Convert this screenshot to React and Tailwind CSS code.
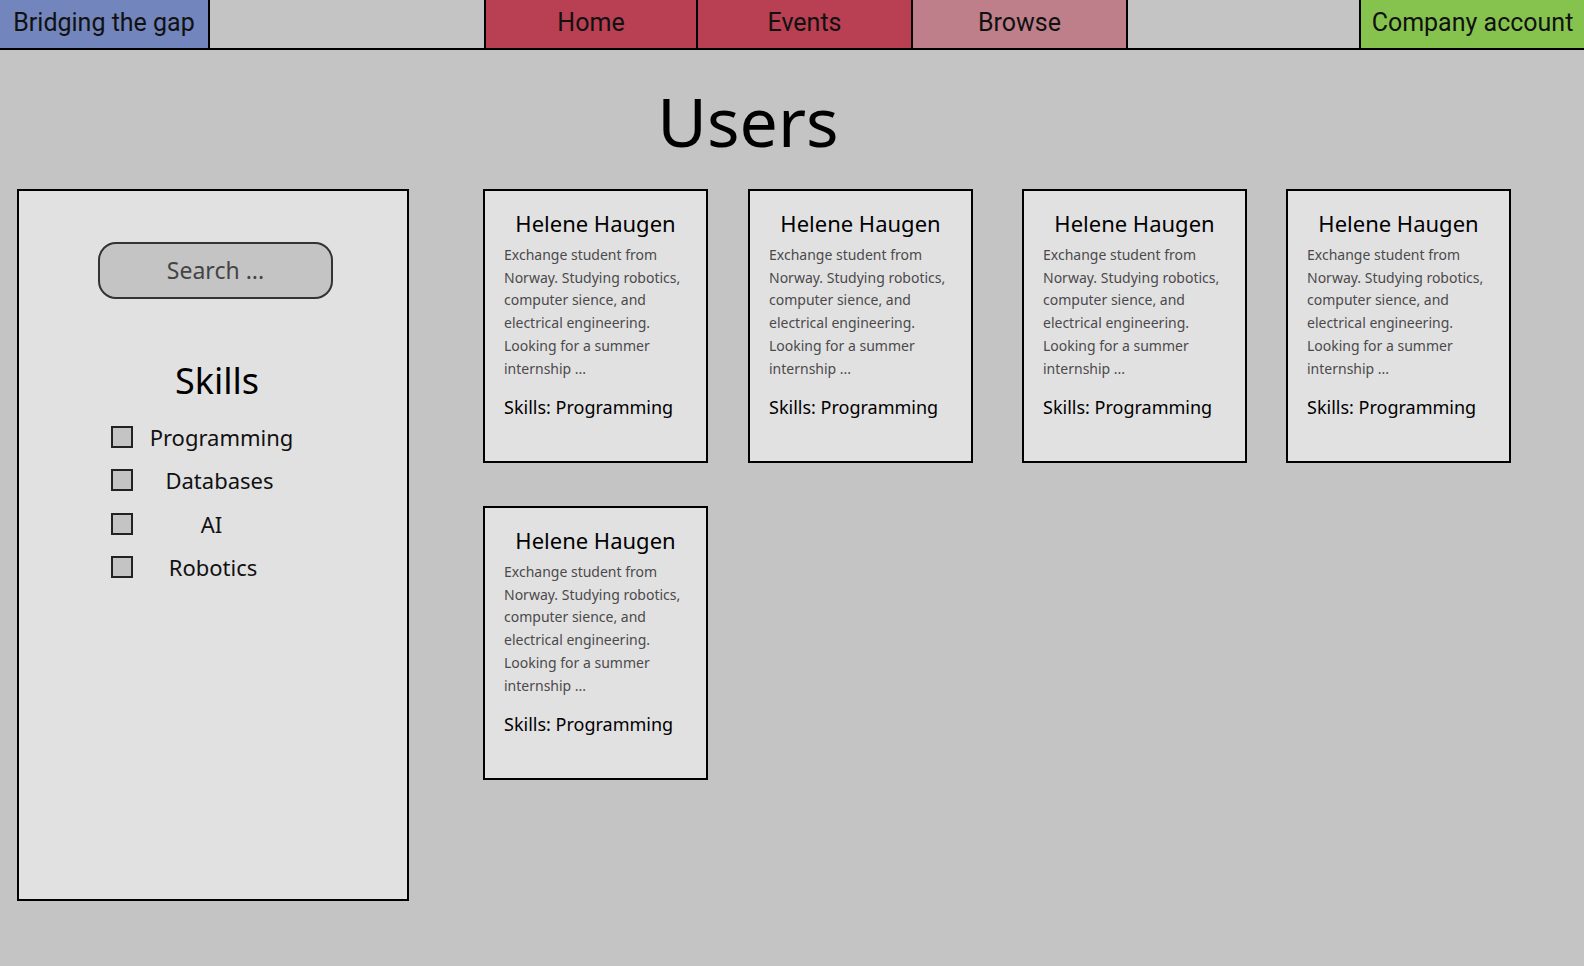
import React from "react";

const skills = [
  { name: "Programming", box: "w-[177px]" },
  { name: "Databases", box: "w-[173px]" },
  { name: "AI", box: "w-[157px]" },
  { name: "Robotics", box: "w-[160px]" },
];

const users = [
  { id: 1, name: "Helene Haugen", skill: "Programming" },
  { id: 2, name: "Helene Haugen", skill: "Programming" },
  { id: 3, name: "Helene Haugen", skill: "Programming" },
  { id: 4, name: "Helene Haugen", skill: "Programming" },
  { id: 5, name: "Helene Haugen", skill: "Programming" },
];

const bio = [
  "Exchange student from",
  "Norway. Studying robotics,",
  "computer sience, and",
  "electrical engineering.",
  "Looking for a summer",
  "internship ...",
];

function Navbar() {
  return (
    <nav className="flex h-[50px] border-b-2 border-black bg-[#c4c4c4] font-['Roboto',sans-serif] text-[25px] text-[#111]">
      <div className="flex w-[210px] items-center justify-center border-r-2 border-black bg-[#7385bd] pb-[2px]">
        Bridging the gap
      </div>
      <div className="ml-[274px] flex">
        <div className="flex w-[214px] items-center justify-center border-x-2 border-black bg-[#b93f53] pb-[2px]">
          Home
        </div>
        <div className="flex w-[215px] items-center justify-center border-r-2 border-black bg-[#b93f53] pb-[2px]">
          Events
        </div>
        <div className="flex w-[215px] items-center justify-center border-r-2 border-black bg-[#be7f8a] pb-[2px]">
          Browse
        </div>
      </div>
      <div className="ml-auto flex w-[225px] items-center justify-center border-l-2 border-black bg-[#86c34e] pb-[2px]">
        Company account
      </div>
    </nav>
  );
}

function Sidebar() {
  return (
    <aside className="ml-[17px] flex h-[712px] w-[392px] flex-col border-2 border-black bg-[#e2e1e2]">
      <div className="ml-[79px] mt-[51px] flex h-[57px] w-[235px] items-center justify-center rounded-[18px] border-2 border-[#333] bg-[#c4c4c4] text-[23px] text-[#444]">
        Search ...
      </div>
      <h2 className="mt-[58px] pl-[8px] text-center text-[36px] leading-[48px] text-black">
        Skills
      </h2>
      <div className="mt-[21px] ml-[92px] flex flex-col gap-[21.3px]">
        {skills.map((s) => (
          <label key={s.name} className="flex h-[22px] items-center">
            <span className="h-[22px] w-[22px] border-2 border-[#222] bg-[#c4c4c4]"></span>
            <span className={`${s.box} text-center text-[22px] leading-[22px] text-[#111]`}>
              {s.name}
            </span>
          </label>
        ))}
      </div>
    </aside>
  );
}

function UserCard({ user }) {
  return (
    <div className="h-[274px] w-[225px] border-2 border-black bg-[#e2e1e2] px-[19px] pt-[17px]">
      <h3 className="text-center text-[22px] leading-[30px] text-black">{user.name}</h3>
      <p className="mt-[6px] text-[14px] leading-[22.7px] text-[#4a4a4a]">
        {bio.map((line, i) => (
          <span key={i} className="block whitespace-nowrap">
            {line}
          </span>
        ))}
      </p>
      <p className="mt-[15px] text-[18px] leading-[24px] text-black">Skills: {user.skill}</p>
    </div>
  );
}

export default function App() {
  return (
    <div className="min-h-[966px] bg-[#c4c4c4] font-['Noto_Sans',sans-serif]">
      <Navbar />
      <div className="mt-[31px] w-[1496px] text-center text-[68px] leading-[80px] text-black">
        Users
      </div>
      <main className="mt-[28px] flex items-start">
        <Sidebar />
        <div className="ml-[74px] grid grid-cols-[265px_274px_264px_225px] gap-y-[43px]">
          {users.map((u) => (
            <UserCard key={u.id} user={u} />
          ))}
        </div>
      </main>
    </div>
  );
}
